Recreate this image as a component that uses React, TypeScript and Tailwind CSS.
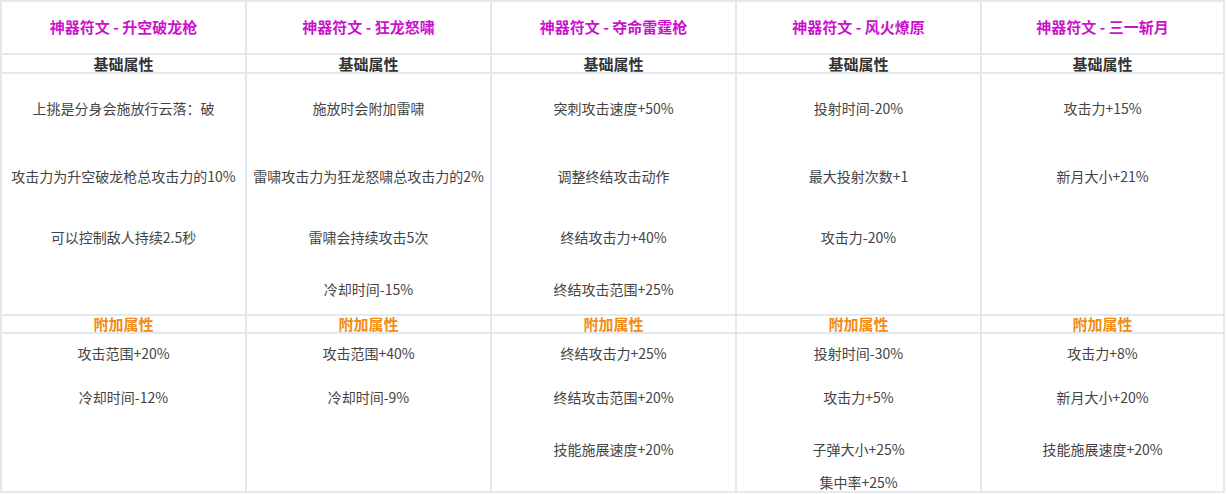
import React from "react";

type Col = { title: string; base: string[]; extra: string[] };

const cols: Col[] = [
  {
    title: "升空破龙枪",
    base: ["上挑是分身会施放行云落：破", "攻击力为升空破龙枪总攻击力的10%", "可以控制敌人持续2.5秒"],
    extra: ["攻击范围+20%", "冷却时间-12%"],
  },
  {
    title: "狂龙怒啸",
    base: ["施放时会附加雷啸", "雷啸攻击力为狂龙怒啸总攻击力的2%", "雷啸会持续攻击5次", "冷却时间-15%"],
    extra: ["攻击范围+40%", "冷却时间-9%"],
  },
  {
    title: "夺命雷霆枪",
    base: ["突刺攻击速度+50%", "调整终结攻击动作", "终结攻击力+40%", "终结攻击范围+25%"],
    extra: ["终结攻击力+25%", "终结攻击范围+20%", "技能施展速度+20%"],
  },
  {
    title: "风火燎原",
    base: ["投射时间-20%", "最大投射次数+1", "攻击力-20%"],
    extra: ["投射时间-30%", "攻击力+5%", "子弹大小+25%", "集中率+25%"],
  },
  {
    title: "三一斩月",
    base: ["攻击力+15%", "新月大小+21%"],
    extra: ["攻击力+8%", "新月大小+20%", "技能施展速度+20%"],
  },
];

const baseMt = ["mt-[24px]", "mt-[48px]", "mt-[41px]", "mt-[32px]"];
const extraMt = ["mt-[9px]", "mt-[24px]", "mt-[32px]", "mt-[13px]"];

const font = "font-['Microsoft_YaHei','Noto_Sans_CJK_SC',sans-serif]";

export default function App() {
  return (
    <div className={`w-[1226px] h-[494px] bg-white overflow-hidden ${font}`}>
      <div className="inline-grid grid-cols-[243px_243px_243px_243px_241px] grid-rows-[51px_17px_240px_16px_157px] gap-[2px] p-[2px] bg-[#e2e9ef]">
        {cols.map((c) => (
          <div key={"t" + c.title} className="bg-white flex items-center justify-center text-[15px] font-bold text-[#cc11cc] whitespace-pre">
            {"神器符文 - " + c.title}
          </div>
        ))}
        {cols.map((c) => (
          <div key={"h" + c.title} className="bg-white flex items-center justify-center text-[15px] leading-[16px] font-bold text-[#333333]">
            基础属性
          </div>
        ))}
        {cols.map((c) => (
          <div key={"b" + c.title} className="bg-white flex flex-col items-center text-[14px] leading-[20px] text-[#444444] overflow-hidden">
            {c.base.map((t, i) => (
              <div key={i} className={`h-[20px] whitespace-nowrap ${baseMt[i]}`}>
                {t}
              </div>
            ))}
          </div>
        ))}
        {cols.map((c) => (
          <div key={"x" + c.title} className="bg-white flex items-center justify-center text-[15px] leading-[16px] font-bold text-[#f08c12]">
            附加属性
          </div>
        ))}
        {cols.map((c) => (
          <div key={"e" + c.title} className="bg-white flex flex-col items-center text-[14px] leading-[20px] text-[#444444] overflow-hidden">
            {c.extra.map((t, i) => (
              <div key={i} className={`h-[20px] whitespace-nowrap ${extraMt[i]}`}>
                {t}
              </div>
            ))}
          </div>
        ))}
      </div>
    </div>
  );
}
